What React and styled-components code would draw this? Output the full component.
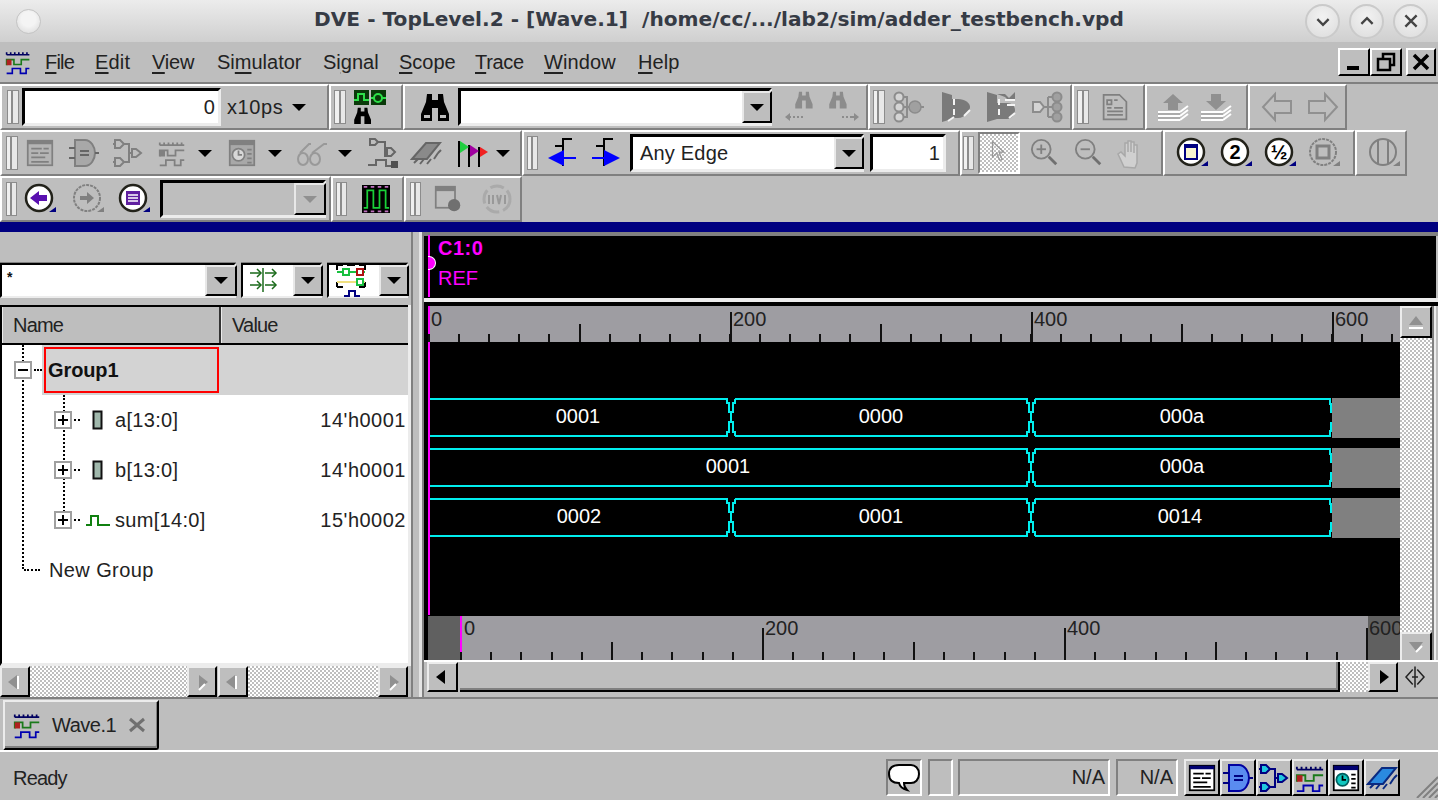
import React from "react";
import styled, { createGlobalStyle } from "styled-components";

const GlobalStyle = createGlobalStyle`
  html, body { margin: 0; padding: 0; background: #bebebe; }
  body { font-family: "Liberation Sans", Arial, sans-serif; font-size: 20px; color: #111; overflow: hidden; }
  * { box-sizing: border-box; }
`;

const checker = `repeating-conic-gradient(#bebebe 0 25%, #fff 0 50%) 0 0 / 4px 4px`;

const Window = styled.div`
  width: 1438px;
  height: 800px;
  display: flex;
  flex-direction: column;
  background: #bebebe;
  overflow: hidden;
`;

const TitleBar = styled.div`
  height: 42px;
  flex: none;
  display: grid;
  grid-template-columns: 1fr auto 1fr;
  align-items: center;
  background: linear-gradient(#ececec, #cfcfcf);
`;

const Orb = styled.div`
  width: 25px;
  height: 25px;
  margin-left: 16px;
  border-radius: 50%;
  background: radial-gradient(circle at 50% 40%, #f4f4f4 0 40%, #d6d6d6 100%);
  border: 1px solid #c4c4c4;
`;

const Title = styled.div`
  font-family: "DejaVu Sans", sans-serif;
  font-weight: bold;
  font-size: 20.15px;
  color: #363b45;
  white-space: pre;
  padding-bottom: 5px;
`;

const WinButtons = styled.div`
  display: flex;
  justify-content: flex-end;
  gap: 9px;
  padding-right: 10px;
`;

const WinButton = styled.div`
  width: 35px;
  height: 35px;
  border-radius: 50%;
  border: 2px solid #cacaca;
  background: radial-gradient(circle at 50% 35%, #f2f2f2, #dcdcdc);
  display: flex;
  align-items: center;
  justify-content: center;
`;

const MenuBar = styled.div`
  height: 42px;
  flex: none;
  display: flex;
  align-items: center;
  border-bottom: 2px solid #808080;
  padding-left: 5px;
`;

const MenuItem = styled.span`
  flex: none;
  width: ${(p) => p.$w}px;
  letter-spacing: ${(p) => p.$ls}px;
  color: #222;
  u { text-underline-offset: 3px; text-decoration-thickness: 2px; }
`;

const MdiGroup = styled.div`
  margin-left: auto;
  display: flex;
  align-self: flex-start;
  margin-top: 6px;
  padding-right: 2px;
`;

const MdiButton = styled.div`
  width: ${(p) => p.$w}px;
  height: 28px;
  margin-left: ${(p) => p.$ml || 0}px;
  border: 2px solid;
  border-color: #fff #000 #000 #fff;
  background: #bebebe;
  display: flex;
  align-items: center;
  justify-content: center;
`;

const ToolRow = styled.div`
  height: 46px;
  flex: none;
  display: flex;
`;

const Seg = styled.div`
  width: ${(p) => p.$w}px;
  flex: none;
  display: flex;
  align-items: center;
  border: 2px solid;
  border-color: #fff #808080 #808080 #fff;
`;

const Grip = styled.div`
  flex: none;
  width: ${(p) => p.$w || 11}px;
  height: 34px;
  margin-left: ${(p) => p.$ml || 0}px;
  border: 1px solid #8c8c8c;
  background: linear-gradient(90deg, #f0f0f0 0 35%, #8c8c8c 35% 55%, #e8e8e8 55% 100%);
`;

const Tool = styled.div`
  flex: none;
  width: ${(p) => p.$w}px;
  margin-left: ${(p) => p.$ml || 0}px;
  display: flex;
  align-items: center;
  justify-content: ${(p) => p.$justify || "center"};
  gap: 4px;
`;

const PointerTool = styled(Tool)`
  height: 42px;
  background: ${checker};
  border: 2px solid;
  border-color: #808080 #fff #fff #808080;
`;

const Field = styled.div`
  flex: none;
  display: flex;
  align-items: center;
  justify-content: ${(p) => (p.$right ? "flex-end" : "flex-start")};
  width: ${(p) => p.$w}px;
  height: ${(p) => p.$h || 38}px;
  margin-left: ${(p) => p.$ml || 0}px;
  padding: ${(p) => (p.$right ? "0 3px 0 0" : "0 0 0 7px")};
  border: 3px solid;
  border-color: #000 #ececec #ececec #000;
  background: ${(p) => (p.$off ? "#bebebe" : "#fff")};
  letter-spacing: 0.2px;
  color: #222;
`;

const ComboButton = styled.div`
  margin-left: auto;
  flex: none;
  width: ${(p) => p.$w || 30}px;
  height: 100%;
  display: flex;
  align-items: center;
  justify-content: center;
  border: 2px solid;
  border-color: #e8e8e8 #000 #000 #e8e8e8;
  background: #bebebe;
  margin-right: ${(p) => p.$mr || -3}px;
`;

const Caret = styled.span`
  flex: none;
  width: 0;
  height: 0;
  border-left: ${(p) => p.$s || 7}px solid transparent;
  border-right: ${(p) => p.$s || 7}px solid transparent;
  border-top: ${(p) => p.$s || 7}px solid ${(p) => p.$c || "#000"};
`;

const Unit = styled.span`
  margin-left: 6px;
  width: 60px;
  flex: none;
  color: #222;
  letter-spacing: 0.6px;
`;

const Band = styled.div`
  height: 10px;
  flex: none;
  background: #000080;
`;

const Main = styled.div`
  height: 467px;
  flex: none;
  display: flex;
  border-bottom: 2px solid #808080;
`;

const LeftPane = styled.div`
  width: 411px;
  flex: none;
  display: flex;
  flex-direction: column;
`;

const FilterRow = styled.div`
  display: flex;
  height: 35px;
  margin-top: 31px;
  margin-bottom: 7px;
  flex: none;
`;

const FilterBox = styled.div`
  width: ${(p) => p.$w}px;
  margin-left: ${(p) => p.$ml || 0}px;
  flex: none;
  display: flex;
  align-items: center;
  background: #fff;
  border: 2px solid;
  border-color: #000 #ececec #ececec #000;
  box-shadow: 0 -1px 0 #808080;
`;

const Asterisk = styled.span`
  font-size: 14px;
  font-weight: bold;
  line-height: 1;
  align-self: flex-start;
  margin: 5px 0 0 5px;
`;

const SignalTable = styled.div`
  width: 411px;
  flex: 1;
  display: flex;
  flex-direction: column;
  border-left: 2px solid #000;
  border-right: 3px solid #ececec;
  border-bottom: 3px solid #ececec;
  background: #fff;
`;

const HeaderRow = styled.div`
  display: flex;
  flex: none;
  height: 40px;
  border-top: 2px solid #000;
  border-bottom: 2px solid #000;
  background: #bebebe;
`;

const HeaderCell = styled.div`
  width: ${(p) => p.$w}px;
  flex: ${(p) => (p.$w ? "none" : 1)};
  padding-left: 10px;
  display: flex;
  align-items: center;
  border-left: 1px solid #ececec;
  border-right: ${(p) => (p.$w ? "2px solid #333" : "none")};
  color: #222;
  letter-spacing: -0.8px;
`;

const TreeBody = styled.div`
  flex: 1;
  padding-left: 20px;
`;

const Branch = styled.div`
  height: 224px;
  border-left: 2px dotted #000;
`;

const GroupRow = styled.div`
  height: 50px;
  display: flex;
  align-items: center;
`;

const Expander = styled.div`
  flex: none;
  width: 18px;
  height: 18px;
  margin-left: ${(p) => p.$ml}px;
  border: 2px solid #a0a0a0;
  background: #fff;
  display: flex;
  align-items: center;
  justify-content: center;
  color: #000;
`;

const Dots = styled.span`
  flex: none;
  width: ${(p) => p.$w}px;
  height: 0;
  margin-left: 2px;
  border-top: 2px dotted #000;
`;

const GroupCell = styled.div`
  flex: 1;
  height: 50px;
  margin-left: 0;
  background: #d3d3d3;
  padding: 2px 0 0 2px;
`;

const RedBox = styled.div`
  width: 175px;
  height: 46px;
  border: 2px solid #f00;
  padding-left: 2px;
  display: flex;
  align-items: center;
  font-weight: bold;
  letter-spacing: -0.1px;
`;

const Kids = styled.div`
  height: 125px;
  margin-left: 39px;
  border-left: 2px dotted #000;
`;

const SignalRow = styled.div`
  height: 50px;
  display: flex;
  align-items: center;
`;

const SignalIcon = styled.span`
  flex: none;
  width: 30px;
  margin-left: 3px;
  display: flex;
  justify-content: center;
`;

const SignalName = styled.span`
  margin-left: ${(p) => p.$ml}px;
  letter-spacing: ${(p) => p.$ls || 0}px;
  color: #222;
`;

const SignalValue = styled.span`
  margin-left: auto;
  padding-right: 2px;
  letter-spacing: 0.5px;
  color: #222;
`;

const NewRow = styled.div`
  height: 50px;
  display: flex;
  align-items: center;
  margin-top: 25px;
  margin-left: -2px;
`;

const ScrollPair = styled.div`
  display: flex;
  flex: none;
  height: 31px;
`;

const HBar = styled.div`
  width: ${(p) => p.$w}px;
  margin-left: ${(p) => p.$ml || 0}px;
  flex: none;
  display: flex;
  background: ${checker};
`;

const ArrowButton = styled.div`
  width: ${(p) => p.$w || 30}px;
  height: ${(p) => p.$h || "100%"};
  flex: none;
  margin-left: ${(p) => (p.$end ? "auto" : 0)};
  margin-top: ${(p) => (p.$bottom ? "auto" : 0)};
  background: #bebebe;
  border: 2px solid;
  border-color: #ececec #000 #000 #ececec;
  display: flex;
  align-items: center;
  justify-content: center;
`;

const Splitter = styled.div`
  width: 13px;
  flex: none;
  border-left: 2px solid #808080;
  border-right: 2px solid #808080;
  background: linear-gradient(90deg, #bebebe 0 70%, #e4e4e4 70% 100%);
`;

const RightPane = styled.div`
  flex: 1;
  min-width: 0;
  display: flex;
  flex-direction: column;
  border-top: 4px solid #808080;
  background: #bebebe;
`;

const CursorPanel = styled.div`
  position: relative;
  height: 62px;
  flex: none;
  background: #000;
  padding-left: 4px;
  margin-right: 2px;
`;

const CursorLine = styled.div`
  height: 100%;
  border-left: 2px solid #f0f;
  padding: 0 0 0 8px;
  margin-top: -1px;
  color: #f0f;
  line-height: 27px;
  display: flex;
  flex-direction: column;
  gap: 3px;
`;

const CursorName = styled.span`
  font-weight: bold;
  letter-spacing: 0.5px;
`;

const CursorMark = styled.div`
  position: absolute;
  left: 4px;
  top: 20px;
  width: 8px;
  height: 14px;
  border-radius: 0 7px 7px 0;
  background: #f0f;
  border: 1px solid #fff;
  border-left: none;
`;

const Rule = styled.div`
  height: 4px;
  flex: none;
  background: #ececec;
`;

const WaveFrame = styled.div`
  flex: none;
  height: 360px;
  display: grid;
  grid-template-columns: 976px 32px;
  border-top: 4px solid #000;
`;

const WaveColumn = styled.div`
  display: flex;
  flex-direction: column;
  background: #000;
`;

const Chart = styled.svg`
  display: block;
  flex: none;
  font-family: "Liberation Sans", Arial, sans-serif;
  font-size: 20px;
`;

const VBar = styled.div`
  display: flex;
  flex-direction: column;
  background: ${checker};
  box-shadow: 2px 0 0 #808080, 4px 0 0 #ececec;
`;

const BottomScroll = styled.div`
  flex: none;
  height: 32px;
  display: flex;
  padding-left: 3px;
  border-top: 2px solid #fff;
  margin-top: -2px;
`;

const Thumb = styled.div`
  width: 880px;
  flex: none;
  margin-left: 2px;
  background: #bebebe;
  border-bottom: 2px solid #000;
  border-right: 2px solid #000;
  box-shadow: inset 0 -2px 0 #808080, inset -2px 0 0 #808080;
`;

const Track = styled.div`
  width: 28px;
  flex: none;
  background: ${checker};
`;

const Corner = styled.div`
  width: 34px;
  flex: none;
  display: flex;
  align-items: center;
  justify-content: center;
`;

const TabStrip = styled.div`
  height: 53px;
  flex: none;
  padding: 1px 0 0 3px;
  border-bottom: 2px solid #fff;
`;

const Tab = styled.div`
  width: 156px;
  height: 50px;
  display: flex;
  align-items: center;
  padding-left: 8px;
  border: 2px solid;
  border-color: #ececec #000 #000 #ececec;
  box-shadow: inset -1px -2px 0 #808080;
  border-radius: 0 0 3px 0;
`;

const TabLabel = styled.span`
  margin-left: 11px;
  color: #222;
  letter-spacing: -0.5px;
`;

const StatusBar = styled.div`
  flex: 1;
  display: flex;
  align-items: center;
  padding: 5px 0 2px 13px;
`;

const StatusText = styled.span`
  flex: 1;
  color: #222;
  letter-spacing: -0.8px;
  padding-top: 2px;
`;

const Well = styled.div`
  flex: none;
  width: ${(p) => p.$w}px;
  margin-left: ${(p) => p.$ml || 0}px;
  height: 37px;
  border: 2px solid;
  border-color: #808080 #fff #fff #808080;
  display: flex;
  align-items: center;
  justify-content: flex-end;
  padding-right: 3px;
  color: #222;
`;

const BalloonButton = styled(Well)`
  justify-content: center;
  padding: 0;
`;

const QuickIcon = styled.div`
  flex: none;
  width: 36px;
  height: 37px;
  margin-left: ${(p) => p.$ml || 0}px;
  display: flex;
  align-items: center;
  justify-content: center;
  border: 2px solid;
  border-color: #ececec #000 #000 #ececec;
`;

const SizeGrip = styled.svg`
  flex: none;
  margin-left: 15px;
  align-self: flex-end;
`;

// icons, drawn on a 32 box unless a vb is passed
const Ico = ({ s = 32, h, vb, children }) => (
  <svg width={s} height={h || s} viewBox={vb || "0 0 32 32"} fill="none" style={{ display: "block", flex: "none" }}>
    {children}
  </svg>
);

const GRAY = "#808080";
const BINOC = "M8 3h5v6h6V3h5l1 8 5 12v7H19V17h-6v13H2v-7l5-12z";

const WaveLogo = ({ s = 28, dim }) => (
  <Ico s={s}>
    <path d="M2 4v3M7 4v3M12 4v3M17 4v3M22 4v3M27 4v3M2 7h28" stroke={dim ? GRAY : "#000060"} strokeWidth="2" />
    <path d="M2 20V13h9v6h9v-6h10" stroke={dim ? GRAY : "#1a7a1a"} strokeWidth="2" />
    <rect x="2" y="13" width="6" height="7" fill={dim ? GRAY : "#b02020"} />
    <path d="M2 30h7v-6h10v6h7v-6h4" stroke={dim ? GRAY : "#0000b0"} strokeWidth="2" />
  </Ico>
);

const Binoculars = ({ s = 32, c = "#000" }) => (
  <Ico s={s}>
    <path d={BINOC} fill={c} />
    <rect x="5" y="24" width="6" height="3" fill="#bebebe" />
    <rect x="21" y="24" width="6" height="3" fill="#bebebe" />
  </Ico>
);

const DocLines = ({ dim, s = 28 }) => (
  <Ico s={s}>
    <rect x="2" y="2" width="28" height="28" fill={dim ? "#b4b4b4" : "#fff"} stroke={dim ? GRAY : "#000"} strokeWidth="2" />
    <rect x="2" y="2" width="28" height="4" fill={dim ? GRAY : "#000070"} />
    <path d="M6 11h12M20 11h6M6 16h8M16 16h10M6 21h16M6 26h20" stroke={dim ? GRAY : "#000"} strokeWidth="2" />
  </Ico>
);

const Gate = ({ dim, s = 32 }) => (
  <Ico s={s}>
    <path d="M7 3h10c6 0 10 7 10 13s-4 13-10 13H7z" fill={dim ? "#a8a8a8" : "#5a8cf0"} stroke={dim ? GRAY : "#0000a0"} strokeWidth="2" />
    <path d="M1 11h6M1 21h6M27 16h4M12 14h9M12 18h9" stroke={dim ? "#666" : "#000080"} strokeWidth="2" />
  </Ico>
);

const Mux = ({ dim, s = 32 }) => {
  const line = dim ? GRAY : "#000080";
  const fill = dim ? "none" : "#20c8e0";
  return (
    <Ico s={s}>
      <path d="M3 3h5l4 4-4 4H3zM3 21h5l4 4-4 4H3zM20 12h4l5 4-5 4h-4z" fill={fill} stroke={line} strokeWidth="2" />
      <path d="M12 7h5v18h-5M17 16h3M1 7h2M1 25h2" stroke={line} strokeWidth="2" />
    </Ico>
  );
};

const DocClock = ({ dim, s = 28 }) => (
  <Ico s={s}>
    <rect x="2" y="2" width="28" height="28" fill={dim ? "#a8a8a8" : "#fff"} stroke={dim ? GRAY : "#000"} strokeWidth="2" />
    <rect x="2" y="2" width="28" height="5" fill={dim ? GRAY : "#000070"} />
    <circle cx="12" cy="18" r="7" fill={dim ? "#d8d8d8" : "#10c8c0"} stroke={dim ? GRAY : "#006060"} strokeWidth="2" />
    <path d="M12 13v5h4M22 12h5M22 17h5M22 22h5M22 27h5" stroke={dim ? GRAY : "#000"} strokeWidth="2" />
  </Ico>
);

const Glasses = () => (
  <Ico s={32}>
    <ellipse cx="7" cy="22" rx="5" ry="6" stroke="#999" strokeWidth="2" />
    <ellipse cx="19" cy="22" rx="5" ry="6" stroke="#999" strokeWidth="2" />
    <path d="M4 16l9-9h2M16 16l12-9h3" stroke="#999" strokeWidth="2" />
  </Ico>
);

const MuxWave = () => (
  <Ico s={32}>
    <path d="M4 2h5l3 3-3 3H4zM21 11h4l4 4-4 4h-4z" stroke="#666" strokeWidth="2" />
    <path d="M12 5h7v14h2M19 11h2M2 28h8v-5h10v6h5" stroke="#666" strokeWidth="2" />
    <rect x="25" y="24" width="7" height="7" fill="#505050" />
  </Ico>
);

const Chip = ({ dim, s = 32 }) => (
  <Ico s={s}>
    <path d="M2 22L16 6h14L17 22z" fill={dim ? "#8a8a8a" : "#2a8ae0"} stroke={dim ? "#666" : "#0a2a80"} strokeWidth="2" />
    <path d="M4 26l4-4M10 27l4-5M17 27l4-5M24 22l4-6M28 16l3-3" stroke={dim ? "#666" : "#0a2a80"} strokeWidth="2" />
  </Ico>
);

const Flags = () => (
  <Ico s={32}>
    <path d="M3 4v26M13 8v22M23 10v20" stroke="#000" strokeWidth="2" />
    <path d="M4 4l9 6-9 6z" fill="#20d040" />
    <path d="M14 8l9 6-9 6z" fill="#a000a0" />
    <path d="M24 10l8 5-8 5z" fill="#f02020" />
  </Ico>
);

const EdgeArrow = ({ dir }) =>
  dir === "left" ? (
    <Ico s={30} vb="0 0 30 30">
      <path d="M7 8h8V1h9M15 1v27" stroke="#000" strokeWidth="2" />
      <path d="M0 20l16-8v16z" fill="#0000ff" />
      <path d="M16 20h12" stroke="#0000ff" strokeWidth="2" />
    </Ico>
  ) : (
    <Ico s={30} vb="0 0 30 30">
      <path d="M4 8h8V1h9M12 1v27" stroke="#000" strokeWidth="2" />
      <path d="M28 20l-16-8v16z" fill="#0000ff" />
      <path d="M0 20h12" stroke="#0000ff" strokeWidth="2" />
    </Ico>
  );

const Lens = ({ plus }) => (
  <Ico s={30}>
    <circle cx="12" cy="12" r="10" stroke={GRAY} strokeWidth="2" />
    <path d="M7 12h10" stroke={GRAY} strokeWidth="2" />
    {plus && <path d="M12 7v10" stroke={GRAY} strokeWidth="2" />}
    <path d="M20 20l8 8" stroke="#707070" strokeWidth="3" />
  </Ico>
);

const Hand = () => (
  <Ico s={32}>
    <path d="M8 30L2 17l3-2 4 4V6h3v9-11h3v11-10h3v11-8h3v18l-2 5z" fill="#d0d0d0" stroke="#a8a8a8" strokeWidth="1.5" />
  </Ico>
);

const Pointer = () => (
  <Ico s={26}>
    <path d="M8 2v19l5-5 4 9 3-1-4-9h6z" stroke="#999" strokeWidth="1.5" />
  </Ico>
);

const RoundLens = ({ on, children, s = 32 }) => (
  <Ico s={s}>
    <circle cx="15" cy="15" r="13" fill={on ? "#fff" : "none"} stroke={on ? "#22221a" : GRAY} strokeWidth={on ? 2.5 : 2} strokeDasharray={on ? "none" : "3 1"} />
    {children}
    <path d="M25 29h7v-5z" fill={on ? "#000080" : GRAY} />
  </Ico>
);

const lensText = { fontFamily: "Liberation Sans, sans-serif", fontWeight: 700, textAnchor: "middle", fill: "#000" };

const GateStack = ({ kind }) => {
  if (kind === "a") {
    return (
      <Ico s={32}>
        <circle cx="6" cy="6" r="4.5" fill="#d4d4d4" stroke="#8c8c8c" strokeWidth="2" />
        <circle cx="6" cy="16" r="4.5" fill="#d4d4d4" stroke="#8c8c8c" strokeWidth="2" />
        <circle cx="6" cy="26" r="4.5" fill="#d4d4d4" stroke="#8c8c8c" strokeWidth="2" />
        <path d="M11 6h3v20h-3M11 16h5" stroke="#8c8c8c" strokeWidth="2" />
        <circle cx="22" cy="16" r="6" fill="#a0a0a0" stroke="#8c8c8c" strokeWidth="1.5" />
        <path d="M28 16h3" stroke="#8c8c8c" strokeWidth="2" />
      </Ico>
    );
  }
  if (kind === "b") {
    return (
      <Ico s={32}>
        <path d="M2 1l10 3v24L2 31z" fill="#7a7a7a" />
        <path d="M12 8h6c7 0 12 4 12 8s-5 11-12 11h-6z" fill="#7a7a7a" />
        <path d="M14 8v6M14 18v6M24 25l6-6M8 30l6-4" stroke="#f4f4f4" strokeWidth="2" />
      </Ico>
    );
  }
  if (kind === "c") {
    return (
      <Ico s={32}>
        <path d="M2 1l10 3v24L2 31z" fill="#7a7a7a" />
        <path d="M12 3h8l4 4 6-6v9h-6l-4-4zM12 12h10c5 0 8 3 8 7s-3 9-8 9H12z" fill="#7a7a7a" />
        <path d="M14 8v6M14 18v6M20 9h10M22 14h8M24 27l6-5" stroke="#f4f4f4" strokeWidth="2" />
      </Ico>
    );
  }
  return (
    <Ico s={32}>
      <path d="M1 11h7l4 5-4 5H1z" fill="#d4d4d4" stroke="#8c8c8c" strokeWidth="2" />
      <path d="M12 16h4M16 6v20M16 6h4M16 16h4M16 26h4" stroke="#8c8c8c" strokeWidth="2" />
      <circle cx="25" cy="6" r="4.5" fill="#a0a0a0" stroke="#8c8c8c" strokeWidth="2" />
      <circle cx="25" cy="16" r="4.5" fill="#a0a0a0" stroke="#8c8c8c" strokeWidth="2" />
      <circle cx="25" cy="26" r="4.5" fill="#a0a0a0" stroke="#8c8c8c" strokeWidth="2" />
    </Ico>
  );
};

const SheetIcon = () => (
  <Ico s={28}>
    <path d="M3 2h18l8 8v20H3z" stroke={GRAY} strokeWidth="2" />
    <path d="M7 8h5v5H7zM15 8h4M7 17h5M15 17h10M7 21h18M7 25h18" stroke={GRAY} strokeWidth="2" />
  </Ico>
);

const Stack = ({ up }) => (
  <Ico s={34} vb="0 0 34 34">
    <path d={up ? "M16 4l10 9h-5v7H11v-7H6z" : "M11 4h10v7h5l-10 9-10-9h5z"} fill="#909090" />
    <path d="M1 22h22M1 26h22M1 30h22" stroke="#fff" strokeWidth="2" />
    <path d="M23 22l8-6M23 26l8-6M23 30l8-6" stroke="#fff" strokeWidth="2" />
    <path d="M1 24h22M1 28h22" stroke="#999" strokeWidth="1" />
  </Ico>
);

const HollowArrow = ({ right }) => (
  <Ico s={32}>
    <path d={right ? "M2 10h16V3l12 13-12 13v-7H2z" : "M30 10H14V3L2 16l12 13v-7h16z"} stroke="#909090" strokeWidth="2" />
  </Ico>
);

const FindBack = () => (
  <Tool $w={76} $ml={12} $justify="space-between">
    <Ico s={34} vb="0 0 34 34">
      <g transform="translate(10 0) scale(.62)"><path d={BINOC} fill="#8c8c8c" /></g>
      <path d="M3 27h4M9 27h2M13 27h2M17 27h2" stroke="#8c8c8c" strokeWidth="2" />
      <path d="M1 27l5-4v8z" fill="#8c8c8c" />
    </Ico>
    <Ico s={34} vb="0 0 34 34">
      <g transform="translate(2 0) scale(.62)"><path d={BINOC} fill="#8c8c8c" /></g>
      <path d="M16 27h2M20 27h2M24 27h4" stroke="#8c8c8c" strokeWidth="2" />
      <path d="M33 27l-5-4v8z" fill="#8c8c8c" />
    </Ico>
  </Tool>
);

const FindWave = () => (
  <Ico s={36} vb="0 0 36 36">
    <rect x="2" y="1" width="15" height="15" fill="#0a3a0a" />
    <rect x="19" y="1" width="15" height="15" fill="#0a3a0a" />
    <path d="M2 11h4V5h6v6h5" stroke="#2ee04a" strokeWidth="2" />
    <path d="M19 9h4M30 9h4" stroke="#2ee04a" strokeWidth="2" />
    <circle cx="26" cy="9" r="4" stroke="#2ee04a" strokeWidth="2" />
    <g transform="translate(1 17) scale(.6)"><path d={BINOC} fill="#000" /></g>
  </Ico>
);

const WaveBlock = () => (
  <Ico s={28}>
    <rect width="32" height="32" fill="#000" />
    <path d="M2 26h4V6h7v20h7V6h7v20h4" stroke="#19d038" strokeWidth="2" />
    <path d="M2 2h4M10 2h4M18 2h4M26 2h4M2 30h4M10 30h4M18 30h4M26 30h4" stroke="#c070c0" strokeWidth="2" />
  </Ico>
);

const WinCog = () => (
  <Ico s={28}>
    <rect x="2" y="2" width="22" height="24" stroke={GRAY} strokeWidth="2" />
    <rect x="2" y="2" width="22" height="5" fill={GRAY} />
    <circle cx="23" cy="23" r="7" fill="#707070" />
  </Ico>
);

const SyncBadge = () => (
  <Ico s={34} vb="0 0 34 34">
    <circle cx="17" cy="17" r="13" stroke="#aaa" strokeWidth="3" strokeDasharray="14 4" />
    <path d="M9 13v9M13 13v9M17 13l2 9 2-9M25 13v9" stroke="#999" strokeWidth="2" />
  </Ico>
);

const RouteIcon = () => (
  <Ico s={36} vb="0 0 36 36">
    <path d="M2 10h11M17 10h11M2 22h11M17 22h11" stroke="#1a6a1a" strokeWidth="1.5" />
    <path d="M9 6l4 4-4 4M24 6l4 4-4 4M9 18l4 4-4 4M24 18l4 4-4 4" stroke="#1a6a1a" strokeWidth="1.5" />
    <path d="M15 5v24" stroke="#1a6a1a" strokeWidth="1.5" />
  </Ico>
);

const ScopeIcon = () => (
  <Ico s={36} vb="0 0 36 36">
    <path d="M3 2h6M13 2h8M25 2h6M3 2v5M31 2v5M3 24v-5M31 24v-5M3 24h6M25 24h6" stroke="#000" strokeWidth="2" />
    <path d="M3 9h28" stroke="#19c040" strokeWidth="2" />
    <path d="M3 19h28" stroke="#f0e080" strokeWidth="2" />
    <rect x="9" y="6" width="6" height="6" fill="#fff" stroke="#19c040" strokeWidth="2" />
    <rect x="23" y="6" width="6" height="6" fill="#fff" stroke="#b01010" strokeWidth="2" />
    <rect x="23" y="16" width="6" height="6" fill="#fff" stroke="#19c040" strokeWidth="2" />
    <path d="M10 33h5v-5h6v5h5" stroke="#000080" strokeWidth="2" />
  </Ico>
);

const Balloon = () => (
  <Ico s={34} vb="0 0 34 34">
    <path d="M12 4h12c4 0 8 3 8 9s-4 9-8 9h-7c0 3 1 5 3 7-4-1-7-3-8-7-6 0-10-3-10-9s4-9 10-9z" fill="#fff" stroke="#000" strokeWidth="2" />
  </Ico>
);

const ArrowL = ({ dim }) => (
  <Ico s={18} vb="0 0 18 18">
    <path d="M2 9l9-7v14z" fill={dim ? "#909090" : "#000"} />
    {dim && <path d="M12 3v13" stroke="#fff" strokeWidth="2" />}
  </Ico>
);

const ArrowR = ({ dim }) => (
  <Ico s={18} vb="0 0 18 18">
    <path d="M15 9L6 2v14z" fill={dim ? "#909090" : "#000"} />
    {dim && <path d="M6 17l6-6" stroke="#fff" strokeWidth="2" />}
  </Ico>
);

// wave chart pieces, in page coordinates through the viewBox
const LANES = [
  { y: 399, cuts: [731, 1031], labels: [[578, "0001"], [881, "0000"], [1182, "000a"]] },
  { y: 449, cuts: [1031], labels: [[728, "0001"], [1182, "000a"]] },
  { y: 499, cuts: [731, 1031], labels: [[579, "0002"], [881, "0001"], [1180, "0014"]] },
];

const busPath = (y, cuts) => {
  const b = y + 37;
  let d = "";
  let start = 430;
  cuts.forEach((c) => {
    d += `M${start} ${y}H${c - 4}V${y + 4}H${c - 2}V${y + 13}H${c}V${y + 23}H${c - 2}V${b - 4}H${c - 4}V${b}H${start}`;
    d += `M${c + 4} ${y}V${y + 4}H${c + 2}V${y + 13}H${c}V${y + 23}H${c + 2}V${b - 4}H${c + 4}V${b}`;
    start = c + 4;
  });
  d += `M${start} ${y}H1330V${y + 5}H1331V${y + 14}M${start} ${b}H1330V${b - 5}H1331V${b - 14}`;
  return d;
};

const Ticks = ({ from, step, count, bottom, small, mid }) => {
  let d = "";
  for (let i = 0; i < count; i++) {
    const x = Math.round(from + step * i);
    const len = i % 10 === 5 ? mid : small;
    d += `M${x} ${bottom}v-${len}`;
  }
  return <path d={d} stroke="#111" strokeWidth="2" />;
};

const TimeRuler = () => (
  <Chart width="976" height="36" viewBox="424 306 976 36">
    <rect x="424" y="306" width="976" height="36" fill="#9e9da2" />
    <rect x="424" y="306" width="4" height="36" fill="#000" />
    <rect x="428" y="306" width="2" height="36" fill="#f0f" />
    <Ticks from={429} step={30.1} count={33} bottom={342} small={8} mid={18} />
    {[731, 1032, 1333].map((x) => (
      <path key={x} d={`M${x} 312v30`} stroke="#111" strokeWidth="2" />
    ))}
    {[[431, "0"], [733, "200"], [1034, "400"], [1335, "600"]].map(([x, t]) => (
      <text key={t} x={x} y="326" fill="#222">{t}</text>
    ))}
  </Chart>
);

const Waves = () => (
  <Chart width="976" height="273" viewBox="424 342 976 273">
    <rect x="424" y="342" width="976" height="273" fill="#000" />
    <rect x="428" y="342" width="2" height="273" fill="#f0f" />
    {LANES.map((lane) => (
      <g key={lane.y}>
        <rect x="1332" y={lane.y - 1} width="68" height="40" fill="#808080" />
        <path d={busPath(lane.y, lane.cuts)} stroke="#00eeee" strokeWidth="2" />
        {lane.labels.map(([x, t]) => (
          <text key={x} x={x} y={lane.y + 24} fill="#fff" textAnchor="middle">{t}</text>
        ))}
      </g>
    ))}
  </Chart>
);

const Overview = () => (
  <Chart width="976" height="47" viewBox="424 615 976 47">
    <rect x="424" y="615" width="976" height="47" fill="#9e9da2" />
    <rect x="424" y="615" width="4" height="47" fill="#000" />
    <rect x="428" y="616" width="32" height="46" fill="#606060" />
    <rect x="1368" y="616" width="32" height="46" fill="#606060" />
    <rect x="424" y="615" width="976" height="1" fill="#000" />
    <rect x="460" y="616" width="2" height="46" fill="#f0f" />
    <Ticks from={461} step={30.2} count={31} bottom={662} small={10} mid={20} />
    {[763, 1065, 1367].map((x) => (
      <path key={x} d={`M${x} 628v34`} stroke="#111" strokeWidth="2" />
    ))}
    {[[464, "0"], [765, "200"], [1067, "400"], [1369, "600"]].map(([x, t]) => (
      <text key={t} x={x} y="635" fill="#222">{t}</text>
    ))}
  </Chart>
);

const MENU = [
  [["F", "ile"], 50, -0.8],
  [["E", "dit"], 57, 0.2],
  [["V", "iew"], 65, -0.2],
  [["Si", "m", "ulator"], 106, 0],
  [["Si", "g", "nal"], 76, 0],
  [["S", "cope"], 76, 0],
  [["T", "race"], 69, -0.3],
  [["W", "indow"], 94, 0.1],
  [["H", "elp"], 60, 0.1],
];

const MenuLabel = ({ parts }) =>
  parts.length === 2 ? (
    <>
      <u>{parts[0]}</u>
      {parts[1]}
    </>
  ) : (
    <>
      {parts[0]}
      <u>{parts[1]}</u>
      {parts[2]}
    </>
  );

const Expand = ({ open, ml }) => (
  <Expander $ml={ml}>
    <Ico s={12} vb="0 0 12 12">
      <path d={open ? "M1 6h10" : "M1 6h10M6 1v10"} stroke="#000" strokeWidth="2" />
    </Ico>
  </Expander>
);

const BusGlyph = () => (
  <Ico s={12} h={20} vb="0 0 12 20">
    <rect x="1.5" y="1.5" width="8" height="17" fill="#a0b8ac" stroke="#111" strokeWidth="2" />
  </Ico>
);

const StepGlyph = () => (
  <Ico s={24} h={14} vb="0 0 24 14">
    <path d="M0 12h5V3h7v9h12" stroke="#108010" strokeWidth="2" />
  </Ico>
);

const SIGNALS = [
  { name: "a[13:0]", value: "14'h0001" },
  { name: "b[13:0]", value: "14'h0001" },
  { name: "sum[14:0]", value: "15'h0002", step: true },
];

export default function App() {
  return (
    <Window>
      <GlobalStyle />

      <TitleBar>
        <Orb />
        <Title>DVE - TopLevel.2 - [Wave.1]  /home/cc/.../lab2/sim/adder_testbench.vpd</Title>
        <WinButtons>
          {["M10 14l6 6 6-6", "M10 19l6-6 6 6", "M10 10l12 12M22 10L10 22"].map((d) => (
            <WinButton key={d}>
              <Ico s={30}>
                <path d={d} stroke="#444" strokeWidth="2.5" />
              </Ico>
            </WinButton>
          ))}
        </WinButtons>
      </TitleBar>

      <MenuBar>
        <Tool $w={40} $justify="flex-start">
          <WaveLogo s={26} />
        </Tool>
        {MENU.map(([parts, w, ls]) => (
          <MenuItem key={parts.join("")} $w={w} $ls={ls}>
            <MenuLabel parts={parts} />
          </MenuItem>
        ))}
        <MdiGroup>
          <MdiButton $w={32}>
            <Ico s={20} vb="0 0 20 20"><path d="M3 16h12" stroke="#000" strokeWidth="4" /></Ico>
          </MdiButton>
          <MdiButton $w={32}>
            <Ico s={20} vb="0 0 20 20"><path d="M7 6V2h11v11h-4M2 7h12v11H2z" stroke="#000" strokeWidth="2.5" /></Ico>
          </MdiButton>
          <MdiButton $w={30} $ml={4}>
            <Ico s={20} vb="0 0 20 20"><path d="M3 3l14 14M17 3L3 17" stroke="#000" strokeWidth="3.5" /></Ico>
          </MdiButton>
        </MdiGroup>
      </MenuBar>

      <ToolRow>
        <Seg $w={329}>
          <Grip $w={12} $ml={5} />
          <Field $w={199} $ml={3} $right>0</Field>
          <Unit>x10ps</Unit>
          <Tool $w={16} $ml={4}><Caret /></Tool>
        </Seg>
        <Seg $w={74}>
          <Grip $w={12} $ml={3} />
          <Tool $w={36} $ml={6}><FindWave /></Tool>
        </Seg>
        <Seg $w={465}>
          <Tool $w={32} $ml={14}><Binoculars /></Tool>
          <Field $w={314} $ml={7}>
            <ComboButton $w={30}><Caret /></ComboButton>
          </Field>
          <FindBack />
        </Seg>
        <Seg $w={204}>
          <Grip $w={12} $ml={3} />
          <Tool $w={32} $ml={8}><GateStack kind="a" /></Tool>
          <Tool $w={32} $ml={15}><GateStack kind="b" /></Tool>
          <Tool $w={32} $ml={13}><GateStack kind="c" /></Tool>
          <Tool $w={32} $ml={15}><GateStack kind="d" /></Tool>
        </Seg>
        <Seg $w={73}>
          <Grip $w={12} $ml={3} />
          <Tool $w={28} $ml={12}><SheetIcon /></Tool>
        </Seg>
        <Seg $w={103}>
          <Tool $w={34} $ml={10}><Stack up /></Tool>
          <Tool $w={34} $ml={9}><Stack /></Tool>
        </Seg>
        <Seg $w={99}>
          <Tool $w={32} $ml={11}><HollowArrow /></Tool>
          <Tool $w={32} $ml={14}><HollowArrow right /></Tool>
        </Seg>
      </ToolRow>

      <ToolRow>
        <Seg $w={522}>
          <Grip $ml={4} $w={12} />
          <Tool $w={28} $ml={8}><DocLines dim /></Tool>
          <Tool $w={32} $ml={14}><Gate dim /></Tool>
          <Tool $w={32} $ml={12}><Mux dim /></Tool>
          <Tool $w={28} $ml={14}><WaveLogo dim /></Tool>
          <Tool $w={14} $ml={12}><Caret /></Tool>
          <Tool $w={28} $ml={16}><DocClock dim /></Tool>
          <Tool $w={14} $ml={12}><Caret /></Tool>
          <Tool $w={32} $ml={14}><Glasses /></Tool>
          <Tool $w={14} $ml={10}><Caret /></Tool>
          <Tool $w={32} $ml={14}><MuxWave /></Tool>
          <Tool $w={32} $ml={12}><Chip dim /></Tool>
          <Tool $w={32} $ml={14}><Flags /></Tool>
          <Tool $w={14} $ml={8}><Caret /></Tool>
        </Seg>
        <Seg $w={438}>
          <Grip $ml={3} />
          <Tool $w={30} $ml={10}><EdgeArrow dir="left" /></Tool>
          <Tool $w={30} $ml={14}><EdgeArrow dir="right" /></Tool>
          <Field $w={234} $ml={8} $h={38}>
            Any Edge
            <ComboButton $w={30}><Caret /></ComboButton>
          </Field>
          <Field $w={76} $ml={6} $h={38} $right>1</Field>
        </Seg>
        <Seg $w={203}>
          <Grip $ml={1} />
          <PointerTool $w={42} $ml={4}><Pointer /></PointerTool>
          <Tool $w={30} $ml={10}><Lens plus /></Tool>
          <Tool $w={30} $ml={14}><Lens /></Tool>
          <Tool $w={32} $ml={12}><Hand /></Tool>
        </Seg>
        <Seg $w={192}>
          <Tool $w={32} $ml={11}>
            <RoundLens on>
              <rect x="9" y="8" width="12" height="14" fill="#f8f4d0" stroke="#000080" strokeWidth="2" />
              <rect x="9" y="8" width="12" height="3" fill="#000080" />
            </RoundLens>
          </Tool>
          <Tool $w={32} $ml={12}>
            <RoundLens on><text x="15" y="22" fontSize="20" style={lensText}>2</text></RoundLens>
          </Tool>
          <Tool $w={32} $ml={12}>
            <RoundLens on><text x="15" y="22" fontSize="20" style={lensText}>½</text></RoundLens>
          </Tool>
          <Tool $w={32} $ml={12}>
            <RoundLens><rect x="9" y="9" width="12" height="12" stroke={GRAY} strokeWidth="3" /></RoundLens>
          </Tool>
        </Seg>
        <Seg $w={52}>
          <Tool $w={32} $ml={11}>
            <Ico s={32}>
              <circle cx="15" cy="15" r="13" stroke={GRAY} strokeWidth="2" />
              <path d="M10 3v24M20 3v24" stroke={GRAY} strokeWidth="2" />
              <path d="M25 29h7v-5z" fill={GRAY} />
            </Ico>
          </Tool>
        </Seg>
      </ToolRow>

      <ToolRow>
        <Seg $w={331}>
          <Grip $ml={4} />
          <Tool $w={32} $ml={7}>
            <RoundLens on><path d="M6 15l9-7v4h8v6h-8v4z" fill="#5a10b0" /></RoundLens>
          </Tool>
          <Tool $w={32} $ml={16}>
            <RoundLens><path d="M22 15l-7-6v4H8v4h7v4z" fill={GRAY} /></RoundLens>
          </Tool>
          <Tool $w={32} $ml={14}>
            <RoundLens on>
              <rect x="8" y="8" width="14" height="14" fill="#6020a0" />
              <path d="M10 12h10M10 15h10M10 18h10" stroke="#fff" strokeWidth="1.5" />
            </RoundLens>
          </Tool>
          <Field $w={166} $ml={10} $off>
            <ComboButton $w={32}><Caret $c="#909090" /></ComboButton>
          </Field>
        </Seg>
        <Seg $w={73}>
          <Grip $ml={3} />
          <Tool $w={28} $ml={15}><WaveBlock /></Tool>
        </Seg>
        <Seg $w={118}>
          <Grip $ml={4} />
          <Tool $w={28} $ml={13}><WinCog /></Tool>
          <Tool $w={34} $ml={18}><SyncBadge /></Tool>
        </Seg>
      </ToolRow>

      <Band />

      <Main>
        <LeftPane>
          <FilterRow>
            <FilterBox $w={236}>
              <Asterisk>*</Asterisk>
              <ComboButton $w={32} $mr={0}><Caret /></ComboButton>
            </FilterBox>
            <FilterBox $w={81} $ml={5}>
              <Tool $w={42} $ml={2}><RouteIcon /></Tool>
              <ComboButton $w={30} $mr={0}><Caret /></ComboButton>
            </FilterBox>
            <FilterBox $w={81} $ml={5}>
              <Tool $w={42} $ml={2}><ScopeIcon /></Tool>
              <ComboButton $w={30} $mr={0}><Caret /></ComboButton>
            </FilterBox>
          </FilterRow>

          <SignalTable>
            <HeaderRow>
              <HeaderCell $w={219}>Name</HeaderCell>
              <HeaderCell>Value</HeaderCell>
            </HeaderRow>
            <TreeBody>
              <Branch>
                <GroupRow>
                  <Expand open ml={-10} />
                  <Dots $w={8} />
                  <GroupCell>
                    <RedBox>Group1</RedBox>
                  </GroupCell>
                </GroupRow>
                <Kids>
                  {SIGNALS.map((sig) => (
                    <SignalRow key={sig.name}>
                      <Expand ml={-11} />
                      <Dots $w={6} />
                      <SignalIcon>{sig.step ? <StepGlyph /> : <BusGlyph />}</SignalIcon>
                      <SignalName $ml={2} $ls={0.3}>{sig.name}</SignalName>
                      <SignalValue>{sig.value}</SignalValue>
                    </SignalRow>
                  ))}
                </Kids>
                <NewRow>
                  <Dots $w={16} />
                  <SignalName $ml={9} $ls={0.4}>New Group</SignalName>
                </NewRow>
              </Branch>
            </TreeBody>
          </SignalTable>

          <ScrollPair>
            <HBar $w={217}>
              <ArrowButton><ArrowL dim /></ArrowButton>
              <ArrowButton $end><ArrowR dim /></ArrowButton>
            </HBar>
            <HBar $w={190} $ml={1}>
              <ArrowButton><ArrowL dim /></ArrowButton>
              <ArrowButton $end><ArrowR dim /></ArrowButton>
            </HBar>
          </ScrollPair>
        </LeftPane>

        <Splitter />

        <RightPane>
          <CursorPanel>
            <CursorLine>
              <CursorName>C1:0</CursorName>
              <span>REF</span>
            </CursorLine>
            <CursorMark />
          </CursorPanel>
          <Rule />
          <WaveFrame>
            <WaveColumn>
              <TimeRuler />
              <Waves />
              <Overview />
            </WaveColumn>
            <VBar>
              <ArrowButton $h="32px" $w={32}>
                <Ico s={18} vb="0 0 18 18"><path d="M9 3l7 9H2z" fill="#909090" /><path d="M2 15h14" stroke="#fff" strokeWidth="2" /></Ico>
              </ArrowButton>
              <ArrowButton $h="30px" $w={32} $bottom>
                <Ico s={18} vb="0 0 18 18"><path d="M2 4h14l-7 9z" fill="#909090" /><path d="M9 14l6-6" stroke="#fff" strokeWidth="2" /></Ico>
              </ArrowButton>
            </VBar>
          </WaveFrame>
          <BottomScroll>
            <ArrowButton $w={31}><ArrowL /></ArrowButton>
            <Thumb />
            <Track />
            <ArrowButton $w={30}><ArrowR /></ArrowButton>
            <Corner>
              <Ico s={24}>
                <path d="M13 6l-9 10 9 10M19 6l9 10-9 10M16 2v28M12 16h8" stroke="#222" strokeWidth="2" />
              </Ico>
            </Corner>
          </BottomScroll>
        </RightPane>
      </Main>

      <TabStrip>
        <Tab>
          <WaveLogo s={28} />
          <TabLabel>Wave.1</TabLabel>
          <Tool $w={18} $ml={12}>
            <Ico s={18} vb="0 0 18 18"><path d="M2 3l14 12M16 3L2 15" stroke="#707070" strokeWidth="3" /></Ico>
          </Tool>
        </Tab>
      </TabStrip>

      <StatusBar>
        <StatusText>Ready</StatusText>
        <BalloonButton $w={36}><Balloon /></BalloonButton>
        <Well $w={25} $ml={6} />
        <Well $w={152} $ml={5}>N/A</Well>
        <Well $w={62} $ml={6}>N/A</Well>
        <QuickIcon $ml={6}><DocLines /></QuickIcon>
        <QuickIcon><Gate /></QuickIcon>
        <QuickIcon><Mux /></QuickIcon>
        <QuickIcon><WaveLogo s={30} /></QuickIcon>
        <QuickIcon><DocClock /></QuickIcon>
        <QuickIcon><Chip /></QuickIcon>
        <SizeGrip width="23" height="23" viewBox="0 0 23 23">
          <path d="M2 23L23 2M8 23L23 8M14 23l9-9M20 23l3-3" stroke="#808080" strokeWidth="2" />
        </SizeGrip>
      </StatusBar>
    </Window>
  );
}
